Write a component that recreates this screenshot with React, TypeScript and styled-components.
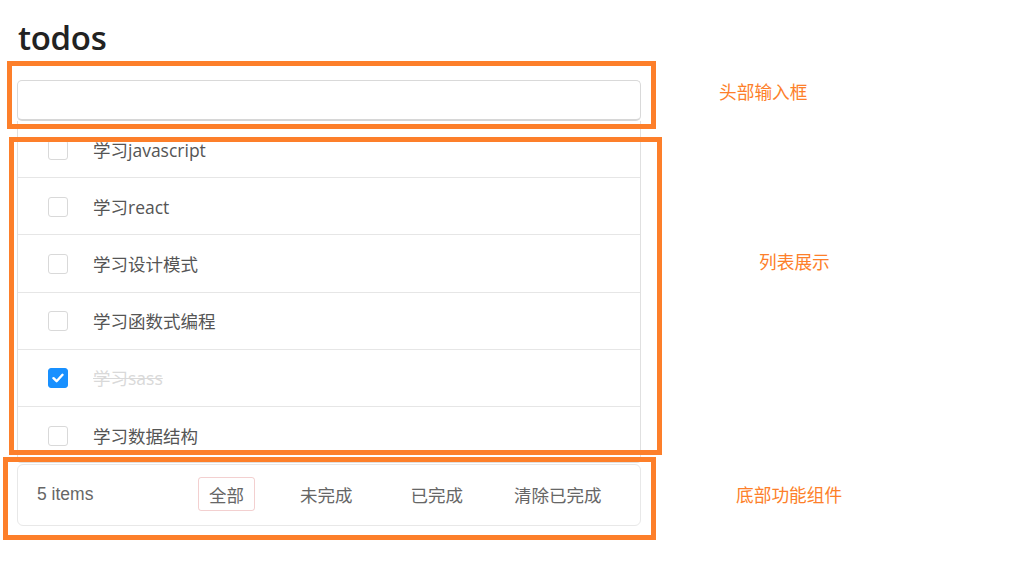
import React from "react";
import styled, { createGlobalStyle } from "styled-components";

const GlobalStyle = createGlobalStyle`
  html, body { margin: 0; padding: 0; background: #ffffff; }
  body { font-family: "Open Sans", "Noto Sans CJK SC", sans-serif; }
`;

const Canvas = styled.div`
  position: relative;
  width: 1029px;
  height: 570px;
  overflow: hidden;
  background: #fff;
`;

const Page = styled.div`
  width: 624px;
  padding: 14px 0 0 17px;
  display: flex;
  flex-direction: column;
`;

const Title = styled.h1`
  margin: 0 0 0 1px;
  height: 52px;
  line-height: 48px;
  font-family: "Open Sans", sans-serif;
  font-size: 33px;
  font-weight: 600;
  color: #222;
  letter-spacing: -0.3px;
`;

const NewTodo = styled.input`
  box-sizing: border-box;
  width: 624px;
  height: 41px;
  margin: 14px 0 0 0;
  border: 1px solid #d9d9d9;
  border-bottom: 2px solid #d6d6d6;
  border-radius: 5px;
  outline: none;
  padding: 0 12px;
  font-size: 16px;
`;

const List = styled.ul`
  list-style: none;
  margin: 0;
  padding: 0;
  box-sizing: border-box;
  width: 624px;
  height: 342px;
  overflow: hidden;
  border: 1px solid #e0e0e0;
  border-top: none;
  border-radius: 0 0 4px 4px;
`;

const Row = styled.li`
  box-sizing: border-box;
  height: 57.2px;
  display: flex;
  align-items: center;
  padding: 0 0 0 30px;
  border-bottom: 1px solid #e6e6e6;
`;

const Box = styled.span<{ $checked: boolean }>`
  box-sizing: border-box;
  width: 20px;
  height: 20px;
  margin-top: 1px;
  border-radius: 3px;
  border: 1px solid ${(p) => (p.$checked ? "#1890ff" : "#d9d9d9")};
  background: ${(p) => (p.$checked ? "#1890ff" : "#fff")};
  display: flex;
  align-items: center;
  justify-content: center;
  flex: none;
`;

const Label = styled.span<{ $done: boolean }>`
  margin-left: 25px;
  font-family: "Open Sans", "Noto Sans CJK SC", sans-serif;
  font-size: 17.5px;
  color: ${(p) => (p.$done ? "#d9d9d9" : "#555")};
  text-decoration: ${(p) => (p.$done ? "line-through" : "none")};
`;

const Footer = styled.div`
  box-sizing: border-box;
  width: 624px;
  height: 62px;
  margin-top: 1px;
  border: 1px solid #e8e8e8;
  border-radius: 6px;
  display: flex;
  align-items: center;
  padding: 0 0 2px 19px;
  color: #666;
`;

const Count = styled.span`
  width: 161px;
  font-family: "Liberation Sans", Arial, sans-serif;
  font-size: 17.5px;
  color: #666;
`;

const Filter = styled.button<{ $active?: boolean; $gap: number }>`
  box-sizing: border-box;
  height: 34px;
  margin-left: ${(p) => p.$gap}px;
  padding: 0 10px;
  background: transparent;
  border: 1px solid ${(p) => (p.$active ? "rgba(220, 120, 120, 0.35)" : "transparent")};
  border-radius: 3px;
  font-family: "Noto Sans CJK SC", sans-serif;
  font-size: 17.5px;
  color: #666;
  cursor: pointer;
`;

const Annot = styled.div<{ $l: number; $t: number; $w: number; $h: number }>`
  position: absolute;
  box-sizing: border-box;
  left: ${(p) => p.$l}px;
  top: ${(p) => p.$t}px;
  width: ${(p) => p.$w}px;
  height: ${(p) => p.$h}px;
  border: 5px solid #fd7f2a;
  pointer-events: none;
`;

const Note = styled.span<{ $l: number; $t: number }>`
  position: absolute;
  left: ${(p) => p.$l}px;
  top: ${(p) => p.$t}px;
  font-family: "Noto Sans CJK SC", sans-serif;
  font-size: 17.7px;
  line-height: 22px;
  color: #fd7f2a;
`;

const todos = [
  { text: "学习javascript", done: false },
  { text: "学习react", done: false },
  { text: "学习设计模式", done: false },
  { text: "学习函数式编程", done: false },
  { text: "学习sass", done: true },
  { text: "学习数据结构", done: false },
];

export default function App() {
  return (
    <Canvas>
      <GlobalStyle />
      <Page>
        <Title>todos</Title>
        <NewTodo />
        <List>
          {todos.map((t) => (
            <Row key={t.text}>
              <Box $checked={t.done}>
                {t.done && (
                  <svg width="12" height="10" viewBox="0 0 12 10">
                    <path d="M1.5 5.2 L4.6 8.2 L10.5 1.8" fill="none" stroke="#fff" strokeWidth="2.4" strokeLinecap="round" strokeLinejoin="round" />
                  </svg>
                )}
              </Box>
              <Label $done={t.done}>{t.text}</Label>
            </Row>
          ))}
        </List>
        <Footer>
          <Count>5 items</Count>
          <Filter $active $gap={0}>全部</Filter>
          <Filter $gap={34}>未完成</Filter>
          <Filter $gap={36}>已完成</Filter>
          <Filter $gap={29}>清除已完成</Filter>
        </Footer>
      </Page>
      <Annot $l={7} $t={61} $w={649} $h={68} />
      <Annot $l={9} $t={137} $w={653} $h={318} />
      <Annot $l={3} $t={457} $w={653} $h={83} />
      <Note $l={719} $t={80}>头部输入框</Note>
      <Note $l={759} $t={250}>列表展示</Note>
      <Note $l={736} $t={483}>底部功能组件</Note>
    </Canvas>
  );
}
